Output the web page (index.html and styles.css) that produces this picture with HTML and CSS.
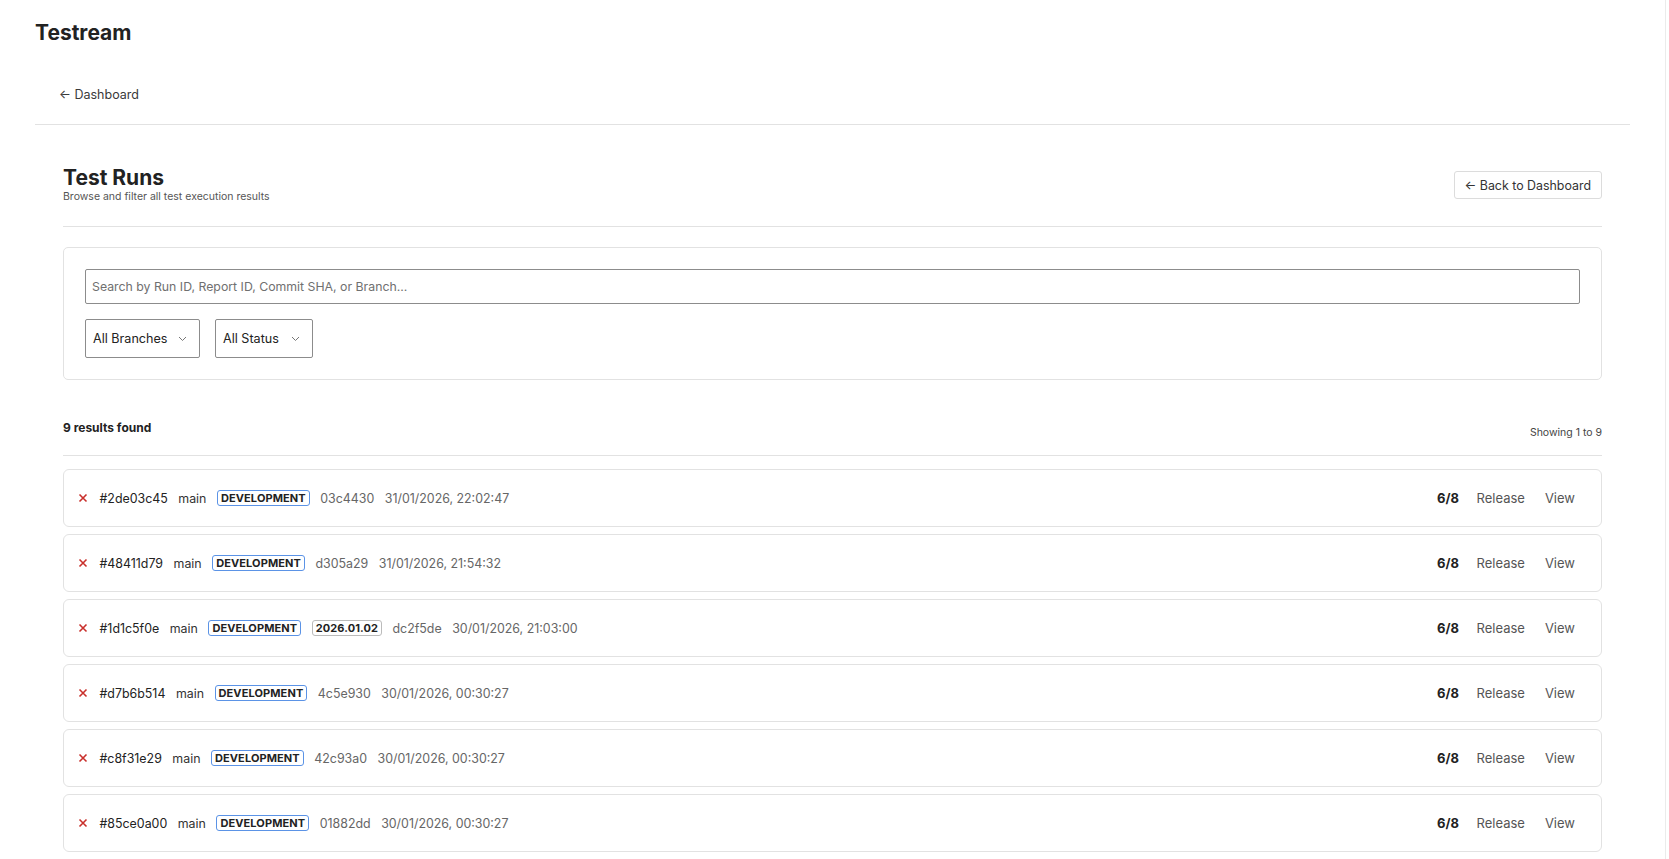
FILE: index.html
```html
<!DOCTYPE html>
<html lang="en">
<head>
    <meta charset="UTF-8">
    <meta name="viewport" content="width=device-width, initial-scale=1.0">
    <title>Testream - Test Runs</title>
    <link rel="stylesheet" href="styles.css">
</head>
<body>
    <div class="app">
        <header class="topbar">
            <div class="brand">Testream</div>
            <nav class="nav">
                <a class="nav-link" href="#">&larr; Dashboard</a>
            </nav>
        </header>

        <main class="main">
            <div class="page-head">
                <div>
                    <h1 class="page-title">Test Runs</h1>
                    <p class="page-sub">Browse and filter all test execution results</p>
                </div>
                <a class="btn-outline" href="#">&larr; Back to Dashboard</a>
            </div>

            <section class="filters">
                <input class="search" type="text" placeholder="Search by Run ID, Report ID, Commit SHA, or Branch...">
                <div class="filter-row">
                    <div class="select branches">
                        <span>All Branches</span>
                        <svg width="9" height="6" viewBox="0 0 9 6"><path d="M1 1l3.5 3.5L8 1" fill="none" stroke="#777" stroke-width="1"/></svg>
                    </div>
                    <div class="select status">
                        <span>All Status</span>
                        <svg width="9" height="6" viewBox="0 0 9 6"><path d="M1 1l3.5 3.5L8 1" fill="none" stroke="#777" stroke-width="1"/></svg>
                    </div>
                </div>
            </section>

            <div class="results-head">
                <div class="results-count">9 results found</div>
                <div class="results-range">Showing 1 to 9</div>
            </div>

            <div class="runs">
                <div class="run">
                    <svg class="fail" width="10" height="10" viewBox="0 0 10 10"><path d="M1.5 1.5l7 7M8.5 1.5l-7 7" stroke="#c9302c" stroke-width="1.6"/></svg>
                    <span class="run-id">#2de03c45</span>
                    <span class="branch">main</span>
                    <span class="badge env">DEVELOPMENT</span>
                    <span class="muted">03c4430</span>
                    <span class="muted">31/01/2026, 22:02:47</span>
                    <span class="spacer"></span>
                    <span class="score">6/8</span>
                    <a class="action" href="#">Release</a>
                    <a class="action" href="#">View</a>
                </div>
                <div class="run">
                    <svg class="fail" width="10" height="10" viewBox="0 0 10 10"><path d="M1.5 1.5l7 7M8.5 1.5l-7 7" stroke="#c9302c" stroke-width="1.6"/></svg>
                    <span class="run-id">#48411d79</span>
                    <span class="branch">main</span>
                    <span class="badge env">DEVELOPMENT</span>
                    <span class="muted">d305a29</span>
                    <span class="muted">31/01/2026, 21:54:32</span>
                    <span class="spacer"></span>
                    <span class="score">6/8</span>
                    <a class="action" href="#">Release</a>
                    <a class="action" href="#">View</a>
                </div>
                <div class="run">
                    <svg class="fail" width="10" height="10" viewBox="0 0 10 10"><path d="M1.5 1.5l7 7M8.5 1.5l-7 7" stroke="#c9302c" stroke-width="1.6"/></svg>
                    <span class="run-id">#1d1c5f0e</span>
                    <span class="branch">main</span>
                    <span class="badge env">DEVELOPMENT</span>
                    <span class="badge version">2026.01.02</span>
                    <span class="muted">dc2f5de</span>
                    <span class="muted">30/01/2026, 21:03:00</span>
                    <span class="spacer"></span>
                    <span class="score">6/8</span>
                    <a class="action" href="#">Release</a>
                    <a class="action" href="#">View</a>
                </div>
                <div class="run">
                    <svg class="fail" width="10" height="10" viewBox="0 0 10 10"><path d="M1.5 1.5l7 7M8.5 1.5l-7 7" stroke="#c9302c" stroke-width="1.6"/></svg>
                    <span class="run-id">#d7b6b514</span>
                    <span class="branch">main</span>
                    <span class="badge env">DEVELOPMENT</span>
                    <span class="muted">4c5e930</span>
                    <span class="muted">30/01/2026, 00:30:27</span>
                    <span class="spacer"></span>
                    <span class="score">6/8</span>
                    <a class="action" href="#">Release</a>
                    <a class="action" href="#">View</a>
                </div>
                <div class="run">
                    <svg class="fail" width="10" height="10" viewBox="0 0 10 10"><path d="M1.5 1.5l7 7M8.5 1.5l-7 7" stroke="#c9302c" stroke-width="1.6"/></svg>
                    <span class="run-id">#c8f31e29</span>
                    <span class="branch">main</span>
                    <span class="badge env">DEVELOPMENT</span>
                    <span class="muted">42c93a0</span>
                    <span class="muted">30/01/2026, 00:30:27</span>
                    <span class="spacer"></span>
                    <span class="score">6/8</span>
                    <a class="action" href="#">Release</a>
                    <a class="action" href="#">View</a>
                </div>
                <div class="run">
                    <svg class="fail" width="10" height="10" viewBox="0 0 10 10"><path d="M1.5 1.5l7 7M8.5 1.5l-7 7" stroke="#c9302c" stroke-width="1.6"/></svg>
                    <span class="run-id">#85ce0a00</span>
                    <span class="branch">main</span>
                    <span class="badge env">DEVELOPMENT</span>
                    <span class="muted">01882dd</span>
                    <span class="muted">30/01/2026, 00:30:27</span>
                    <span class="spacer"></span>
                    <span class="score">6/8</span>
                    <a class="action" href="#">Release</a>
                    <a class="action" href="#">View</a>
                </div>
                <div class="run">
                    <svg class="fail" width="10" height="10" viewBox="0 0 10 10"><path d="M1.5 1.5l7 7M8.5 1.5l-7 7" stroke="#c9302c" stroke-width="1.6"/></svg>
                    <span class="run-id">#5b0e91a4</span>
                    <span class="branch">main</span>
                    <span class="badge env">DEVELOPMENT</span>
                    <span class="muted">7a1d3f2</span>
                    <span class="muted">29/01/2026, 18:12:09</span>
                    <span class="spacer"></span>
                    <span class="score">6/8</span>
                    <a class="action" href="#">Release</a>
                    <a class="action" href="#">View</a>
                </div>
                <div class="run">
                    <svg class="fail" width="10" height="10" viewBox="0 0 10 10"><path d="M1.5 1.5l7 7M8.5 1.5l-7 7" stroke="#c9302c" stroke-width="1.6"/></svg>
                    <span class="run-id">#e3f07c12</span>
                    <span class="branch">main</span>
                    <span class="badge env">DEVELOPMENT</span>
                    <span class="muted">b84c0e6</span>
                    <span class="muted">29/01/2026, 16:45:51</span>
                    <span class="spacer"></span>
                    <span class="score">6/8</span>
                    <a class="action" href="#">Release</a>
                    <a class="action" href="#">View</a>
                </div>
                <div class="run">
                    <svg class="fail" width="10" height="10" viewBox="0 0 10 10"><path d="M1.5 1.5l7 7M8.5 1.5l-7 7" stroke="#c9302c" stroke-width="1.6"/></svg>
                    <span class="run-id">#90a2d6b8</span>
                    <span class="branch">main</span>
                    <span class="badge env">DEVELOPMENT</span>
                    <span class="muted">2f6e9c1</span>
                    <span class="muted">28/01/2026, 11:03:44</span>
                    <span class="spacer"></span>
                    <span class="score">6/8</span>
                    <a class="action" href="#">Release</a>
                    <a class="action" href="#">View</a>
                </div>
            </div>
        </main>
    </div>
    <div class="scroll-track"></div>
</body>
</html>
```

FILE: styles.css
```css
html, body {
    overflow: hidden;
}

body {
    margin: 0;
    background-color: white;
    font-family: Inter, "Noto Sans", sans-serif;
    color: #222;
}

a {
    color: inherit;
    text-decoration: none;
}

.app {
    margin-right: 4px;
    padding: 0 35px;
}

/* top bar */

.brand {
    padding-top: 20px;
    font-size: 21px;
    font-weight: 700;
    line-height: 26px;
    color: #222;
}

.nav {
    padding: 37px 24px 19px;
    border-bottom: 1px solid #e2e2e2;
}

.nav-link {
    font-size: 12.5px;
    line-height: 20px;
    color: #3a3a3a;
}

/* main */

.main {
    padding: 0 28px;
}

.page-head {
    display: flex;
    align-items: center;
    justify-content: space-between;
    padding: 41px 0 22px;
    border-bottom: 1px solid #e2e2e2;
}

.page-title {
    margin: 0;
    font-size: 21px;
    font-weight: 700;
    line-height: 24px;
    color: #222;
}

.page-sub {
    margin: 0;
    font-size: 10.5px;
    line-height: 14px;
    color: #555;
}

.btn-outline {
    display: flex;
    align-items: center;
    height: 26px;
    padding: 0 10px;
    border: 1px solid #dcdcdc;
    border-radius: 3px;
    font-size: 12.4px;
    color: #333;
}

.filters {
    margin-top: 20px;
    padding: 21px;
    border: 1px solid #e2e2e2;
    border-radius: 5px;
}

.search {
    display: block;
    box-sizing: border-box;
    width: 100%;
    height: 35px;
    padding: 0 6px;
    border: 1px solid #8c8c8c;
    border-radius: 2px;
    font-family: inherit;
    font-size: 12.3px;
    color: #222;
}

.search::placeholder {
    color: #707070;
}

.filter-row {
    display: flex;
    gap: 15px;
    margin-top: 15px;
}

.select {
    box-sizing: border-box;
    display: flex;
    align-items: center;
    justify-content: space-between;
    height: 39px;
    padding: 0 12px 0 7px;
    border: 1px solid #8c8c8c;
    border-radius: 2px;
    font-size: 12.6px;
    color: #222;
}

.select.branches {
    width: 115px;
}

.select.status {
    width: 98px;
}

.results-head {
    display: flex;
    justify-content: space-between;
    align-items: flex-start;
    margin-top: 40px;
    padding-bottom: 15px;
    border-bottom: 1px solid #e2e2e2;
}

.results-count {
    font-size: 12px;
    font-weight: 700;
    line-height: 16px;
}

.results-range {
    margin-top: 6px;
    font-size: 10.5px;
    line-height: 14px;
    color: #444;
}

/* runs list */

.runs {
    display: flex;
    flex-direction: column;
    gap: 7px;
    margin-top: 13px;
}

.run {
    display: flex;
    align-items: center;
    gap: 10.5px;
    height: 56px;
    padding: 0 16px 0 14px;
    border: 1px solid #e2e2e2;
    border-radius: 6px;
    font-size: 12.4px;
    color: #222;
}

.fail {
    margin-right: 1px;
}

.run-id {
    color: #222;
}

.branch {
    color: #333;
}

.badge {
    padding: 0 3px;
    border: 1px solid #bbb;
    border-radius: 3px;
    font-size: 11px;
    font-weight: 700;
    line-height: 14px;
    letter-spacing: 0.1px;
    color: #222;
}

.badge.env {
    border-color: #5b93e6;
}

.muted {
    color: #666;
}

.spacer {
    flex: 1;
}

.score {
    margin-right: -3px;
    font-size: 13px;
    font-weight: 700;
    color: #222;
}

.action {
    padding: 6px 10px;
    margin-left: -10.5px;
    font-size: 13px;
    color: #555;
}

.action:first-of-type {
    margin-left: 0;
}

.scroll-track {
    position: fixed;
    top: 0;
    right: 0;
    bottom: 0;
    width: 3px;
    border-left: 1px solid #ebebeb;
}
```
